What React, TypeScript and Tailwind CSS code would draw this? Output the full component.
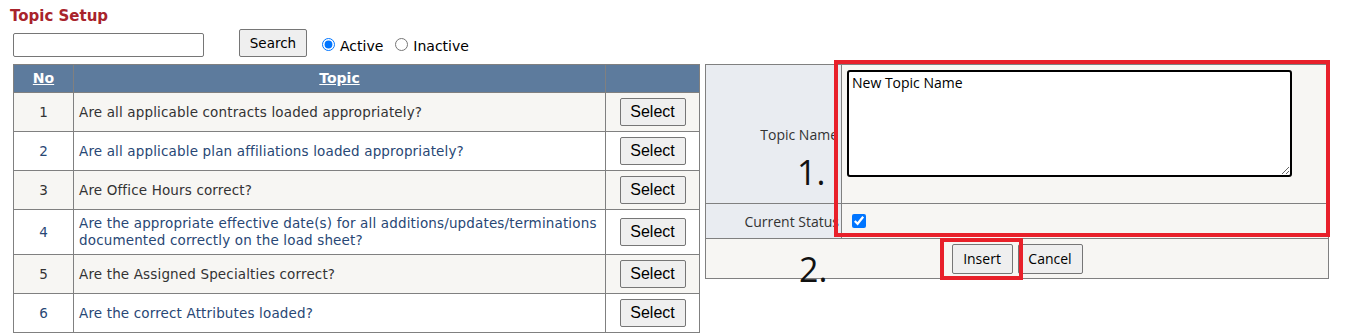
import React from 'react';

const topics = [
  { no: 1, text: 'Are all applicable contracts loaded appropriately?' },
  { no: 2, text: 'Are all applicable plan affiliations loaded appropriately?' },
  { no: 3, text: 'Are Office Hours correct?' },
  { no: 4, text: 'Are the appropriate effective date(s) for all additions/updates/terminations documented correctly on the load sheet?' },
  { no: 5, text: 'Are the Assigned Specialties correct?' },
  { no: 6, text: 'Are the correct Attributes loaded?' },
];

const tahoma = { fontFamily: '"DejaVu Sans", Verdana, sans-serif' };
const segoe = { fontFamily: '"Open Sans", "Noto Sans", sans-serif' };

const App: React.FC = () => {
  return (
    <div className="relative w-[1350px] h-[335px] overflow-hidden bg-white">
      <div className="pl-[10px] pt-[6px]">
        <h1 className="text-[15px] font-bold text-[#a8232b] leading-[20px]" style={tahoma}>Topic Setup</h1>

        <div className="flex items-center mt-[3px] ml-[3px] h-[28px]" style={tahoma}>
          <input type="text" className="w-[191px] h-[24px] mt-[4px] border border-[#767676] rounded-[2px] bg-white" />
          <button className="ml-[35px] h-[28px] w-[68px] border border-[#767676] rounded-[2px] bg-[#efefef] text-[13.5px] text-black">Search</button>
          <label className="flex items-center ml-[15px] mt-[6px] text-[14px] text-black">
            <input type="radio" name="status" defaultChecked className="w-[13px] h-[13px] mr-[5px] mb-[3px] accent-[#0075ff]" />
            Active
          </label>
          <label className="flex items-center ml-[12px] mt-[6px] text-[14px] text-black">
            <input type="radio" name="status" className="w-[13px] h-[13px] mr-[5px] mb-[3px]" />
            Inactive
          </label>
        </div>

        <div className="flex items-start mt-[7px] ml-[3px]">
          <table className="w-[687px] border-collapse border border-[#808080] text-[13.5px] tracking-[0.15px]" style={tahoma}>
            <thead>
              <tr className="bg-[#5d7b9d] h-[28px] text-white font-bold text-[14px] tracking-normal">
                <th className="w-[60px] border border-[#808080] underline">No</th>
                <th className="border border-[#808080] underline">Topic</th>
                <th className="w-[94px] border border-[#808080]"></th>
              </tr>
            </thead>
            <tbody>
              {topics.map((t) => (
                <tr key={t.no} className={t.no % 2 === 1 ? 'bg-[#f7f6f3] text-[#333333]' : 'bg-white text-[#284775]'}>
                  <td className="border border-[#808080] text-center py-[5px]">{t.no}</td>
                  <td className="border border-[#808080] px-[5px] py-[5px] leading-[17px]">{t.text}</td>
                  <td className="border border-[#808080] text-center py-[5px]">
                    <button className="h-[28px] w-[66px] border border-[#767676] rounded-[2px] bg-[#efefef] text-black text-[16px] tracking-normal" style={{ fontFamily: '"Liberation Sans", Arial, sans-serif' }}>Select</button>
                  </td>
                </tr>
              ))}
            </tbody>
          </table>

          <table className="ml-[5px] w-[624px] border-collapse border border-[#808080] text-[14px] text-[#333333]" style={segoe}>
            <tbody>
              <tr className="h-[139px]">
                <td className="w-[136px] bg-[#e9ecf1] border border-[#808080] text-right align-middle pr-[3px]">Topic Name</td>
                <td className="bg-[#f7f6f3] border border-[#808080] align-top pl-[5px] pt-[5px]">
                  <textarea
                    defaultValue="New Topic Name"
                    className="block w-[445px] h-[107px] border-2 border-black rounded-[3px] bg-white px-[3px] py-[1px] text-[14px] text-black leading-[20px] resize"
                  />
                </td>
              </tr>
              <tr className="h-[35px]">
                <td className="bg-[#e9ecf1] border border-[#808080] text-right pr-[2px]">Current Status</td>
                <td className="bg-[#f7f6f3] border border-[#808080] pl-[10px]">
                  <input type="checkbox" defaultChecked className="block w-[14px] h-[14px] accent-[#0075ff]" />
                </td>
              </tr>
              <tr className="h-[40px] bg-[#f7f6f3]">
                <td colSpan={2} className="border border-[#808080] text-center">
                  <button className="h-[30px] w-[61px] border border-[#767676] rounded-[2px] bg-[#efefef] text-black text-[14px]">Insert</button>
                  <button className="ml-[5px] h-[30px] w-[65px] border border-[#767676] rounded-[2px] bg-[#efefef] text-black text-[14px]">Cancel</button>
                </td>
              </tr>
            </tbody>
          </table>
        </div>
      </div>

      {/* annotations */}
      <div className="absolute left-[834px] top-[60px] w-[496px] h-[177px] border-4 border-[#e8202a]" />
      <div className="absolute left-[940px] top-[238px] w-[83px] h-[42px] border-4 border-[#e8202a]" />
      <span className="absolute left-[797px] top-[150px] text-[34px] leading-[44px] text-[#111]" style={segoe}>1.</span>
      <span className="absolute left-[799px] top-[247px] text-[34px] leading-[44px] text-[#111]" style={segoe}>2.</span>
    </div>
  );
};

export default App;
